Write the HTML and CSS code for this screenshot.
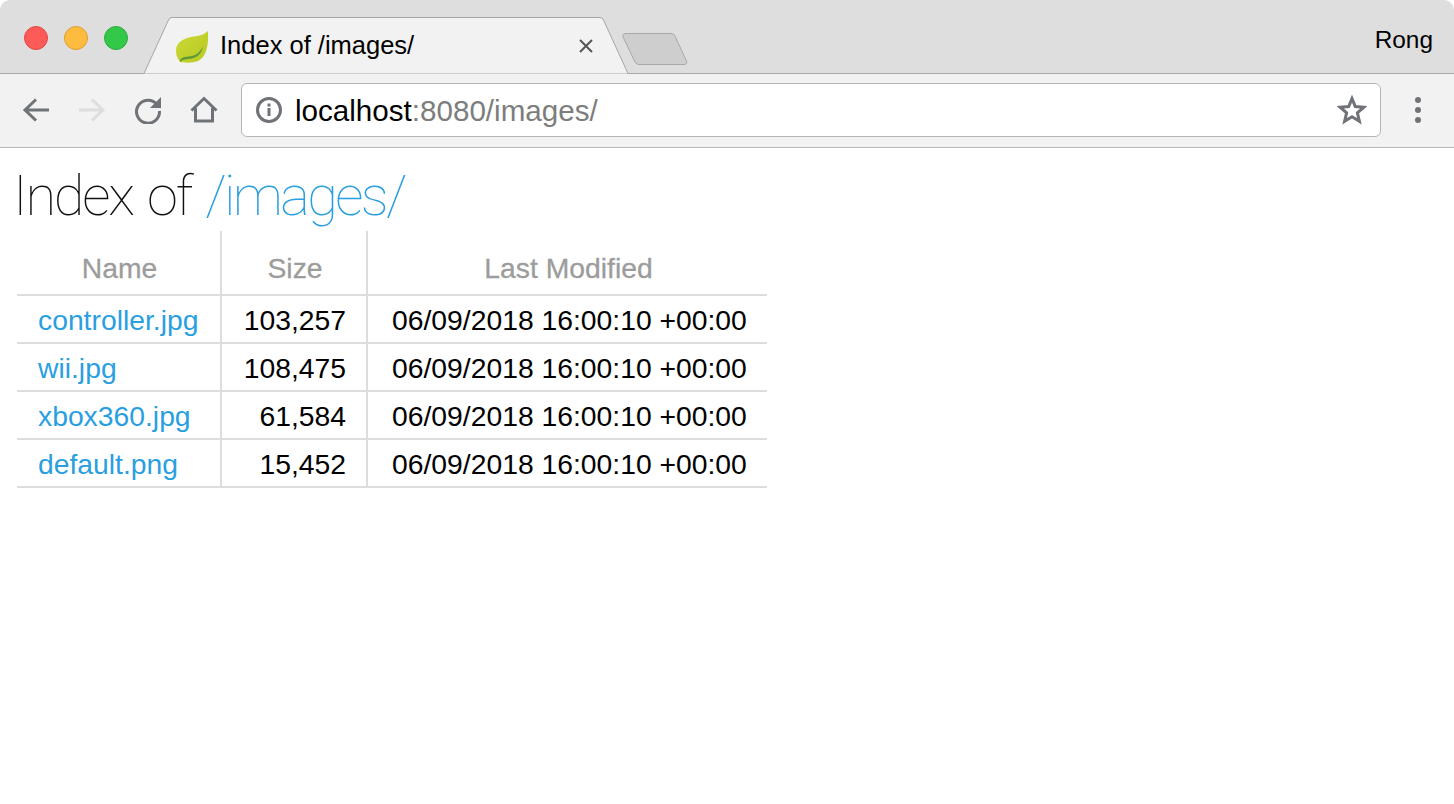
FILE: index.html
```html
<!DOCTYPE html>
<html lang="en">
<head>
    <meta charset="UTF-8">
    <meta name="viewport" content="width=device-width, initial-scale=1.0">
    <title>Index of /images/</title>
    <link rel="stylesheet" href="styles.css">
</head>
<body>
    <header class="browser">
        <div class="tabstrip">
            <div class="lights">
                <span class="light light-red"></span>
                <span class="light light-yellow"></span>
                <span class="light light-green"></span>
            </div>
            <div class="tab">
                <svg class="tab-shape" width="484" height="57" viewBox="0 0 484 57">
                    <path d="M0 56.500 L24.500 3 Q25.500 0.500 28 0.500 L456 0.500 Q458.500 0.500 459.500 3 L484 56.500" fill="#f2f2f2" stroke="#a6a6a6"/>
                </svg>
                <svg class="favicon" width="32" height="32" viewBox="0 0 32 32">
                    <defs>
                        <linearGradient id="leaf" x1="0" y1="0" x2="1" y2="1">
                            <stop offset="0" stop-color="#cbd932"/>
                            <stop offset="1" stop-color="#b8c925"/>
                        </linearGradient>
                    </defs>
                    <path d="M32 0 C28 4 22 5 15 6 C6 8 0 12 0 20 C0 25 2 28 4 31 C9 32 17 32 22 30 C29 27 33 17 32 0Z" fill="url(#leaf)"/>
                    <path d="M4 29 C7 25 11 26 16 25 C21 24 25 20 27 15 C26 22 22 26 16 27.500 C11 28.500 7 28 4 31Z" fill="#5d9a35"/>
                </svg>
                <span class="tab-title">Index of /images/</span>
                <svg class="tab-close" width="14" height="14" viewBox="0 0 14 14">
                    <path d="M1 1 L13 13 M13 1 L1 13" stroke="#555" stroke-width="2" fill="none"/>
                </svg>
            </div>
            <svg class="new-tab" width="66" height="32" viewBox="0 0 66 32">
                <path d="M4 0.500 L49 0.500 Q52 0.500 53 3 L64.500 28 Q65.500 31.500 62 31.500 L17 31.500 Q14 31.500 13 29 L1 4 Q0 0.500 4 0.500Z" fill="#cecece" stroke="#a9a9a9"/>
            </svg>
            <span class="profile">Rong</span>
        </div>
        <div class="toolbar">
            <button class="tool">
                <svg width="28" height="28" viewBox="0 0 28 28"><path d="M27 14 H3 M14 3.500 L3 14 L14 24.500" stroke="#6f7377" stroke-width="3" fill="none"/></svg>
            </button>
            <button class="tool">
                <svg width="28" height="28" viewBox="0 0 28 28"><path d="M1 14 H25 M14 3.500 L25 14 L14 24.500" stroke="#dcdddd" stroke-width="3" fill="none"/></svg>
            </button>
            <button class="tool">
                <svg width="28" height="28" viewBox="0 0 28 28"><path d="M23 8.500 A11.500 11.500 0 1 0 25.500 15" stroke="#6f7377" stroke-width="3" fill="none"/><path d="M27 1 V12 H16Z" fill="#6f7377"/></svg>
            </button>
            <button class="tool">
                <svg width="28" height="28" viewBox="0 0 28 28"><path d="M1.500 14.500 L14 2.500 L26.500 14.500 M5.500 12 V25 H22.500 V12" stroke="#6f7377" stroke-width="3" fill="none"/></svg>
            </button>
            <div class="omnibox">
                <svg class="info" width="28" height="28" viewBox="0 0 28 28">
                    <circle cx="14" cy="14" r="11.500" stroke="#6f7377" stroke-width="3" fill="none"/>
                    <rect x="12.500" y="12" width="3" height="8" fill="#6f7377"/>
                    <rect x="12.500" y="7.500" width="3" height="3" fill="#6f7377"/>
                </svg>
                <span class="url"><span class="url-host">localhost</span>:8080/images/</span>
                <svg class="star" width="30" height="30" viewBox="0 0 30 30">
                    <path d="M15 3.500 L18.300 11.500 L27 12.200 L20.400 17.800 L22.400 26.300 L15 21.800 L7.600 26.300 L9.600 17.800 L3 12.200 L11.700 11.500Z" stroke="#6f7377" stroke-width="3" fill="none"/>
                </svg>
            </div>
            <button class="tool tool-menu">
                <svg width="8" height="28" viewBox="0 0 8 28"><circle cx="4" cy="4" r="3" fill="#6f7377"/><circle cx="4" cy="14" r="3" fill="#6f7377"/><circle cx="4" cy="24" r="3" fill="#6f7377"/></svg>
            </button>
        </div>
    </header>

    <main>
        <h1>Index of <span class="path">/images/</span></h1>
        <table>
            <thead>
                <tr>
                    <th class="col-name">Name</th>
                    <th class="col-size">Size</th>
                    <th class="col-date">Last Modified</th>
                </tr>
            </thead>
            <tbody>
                <tr>
                    <td><a href="#">controller.jpg</a></td>
                    <td class="num">103,257</td>
                    <td>06/09/2018 16:00:10 +00:00</td>
                </tr>
                <tr>
                    <td><a href="#">wii.jpg</a></td>
                    <td class="num">108,475</td>
                    <td>06/09/2018 16:00:10 +00:00</td>
                </tr>
                <tr>
                    <td><a href="#">xbox360.jpg</a></td>
                    <td class="num">61,584</td>
                    <td>06/09/2018 16:00:10 +00:00</td>
                </tr>
                <tr>
                    <td><a href="#">default.png</a></td>
                    <td class="num">15,452</td>
                    <td>06/09/2018 16:00:10 +00:00</td>
                </tr>
            </tbody>
        </table>
    </main>
</body>
</html>
```

FILE: styles.css
```css
body {
    font-family: 'Liberation Sans', Arial, sans-serif;
    background: #fff;
    color: #000;
    margin: 0;
    padding: 0;
}

.tabstrip {
    display: flex;
    align-items: flex-start;
    height: 73px;
    padding-left: 24px;
    background: #dedede;
    border-bottom: 1px solid #a9a9a9;
    border-radius: 10px 10px 0 0;
}

.lights {
    display: flex;
    gap: 16px;
    margin-top: 26px;
}

.light {
    width: 24px;
    height: 24px;
    box-sizing: border-box;
    border-radius: 50%;
    border: 1px solid;
}

.light-red {
    background: #fc5b57;
    border-color: #e2483f;
}

.light-yellow {
    background: #fdbb3f;
    border-color: #e09e2f;
}

.light-green {
    background: #33c848;
    border-color: #29ad3a;
}

.tab {
    position: relative;
    display: flex;
    align-items: center;
    width: 484px;
    height: 57px;
    margin: 17px 0 0 16px;
    box-sizing: border-box;
    padding: 0 35px 0 32px;
}

.tab-shape {
    position: absolute;
    left: 0;
    top: 0;
}

.favicon {
    position: relative;
    margin-top: 3px;
    filter: blur(0.5px);
}

.tab-title {
    position: relative;
    margin-left: 12px;
    font-size: 25.500px;
}

.tab-close {
    position: relative;
    margin-left: auto;
}

.new-tab {
    margin: 33px 0 0 -6px;
}

.profile {
    margin: 25px 21px 0 auto;
    font-size: 24.400px;
    line-height: 30px;
}

.toolbar {
    display: flex;
    align-items: center;
    height: 74px;
    box-sizing: border-box;
    padding: 0 0 2px 8px;
    background: #f2f2f2;
    border-bottom: 1px solid #b9b9b9;
}

.tool {
    display: flex;
    justify-content: center;
    align-items: center;
    width: 56px;
    height: 54px;
    padding: 0;
    background: none;
    border: none;
}

.tool-menu {
    width: 73px;
}

.omnibox {
    flex: 1;
    display: flex;
    align-items: center;
    height: 54px;
    margin-left: 9px;
    padding: 0 13px;
    box-sizing: border-box;
    background: #fff;
    border: 1px solid #b5b5b5;
    border-radius: 6px;
}

.url {
    margin-left: 12px;
    padding-top: 3px;
    font-size: 29.600px;
    color: #7d7d7d;
}

.url-host {
    color: #000;
}

.star {
    margin-left: auto;
}

main {
    padding: 0 17px;
}

h1 {
    height: 83px;
    margin: 0 0 0 -4px;
    font-family: Roboto, 'Liberation Sans', sans-serif;
    font-size: 56px;
    font-weight: 100;
    letter-spacing: -2.200px;
    word-spacing: 3px;
    line-height: 97px;
    color: #111;
}

.path {
    color: #2a9fdf;
    letter-spacing: -2.700px;
}

table {
    border-collapse: separate;
    border-spacing: 0;
    font-size: 28.300px;
}

th, td {
    box-sizing: border-box;
    padding: 0 21px;
    border-right: 2px solid #ddd;
    border-bottom: 2px solid #ddd;
}

th:last-child, td:last-child {
    border-right: none;
}

th {
    height: 65px;
    padding: 12px 20px 0 22px;
    font-weight: normal;
    color: #9c9c9c;
    text-align: center;
    -webkit-text-stroke: 0.300px #9c9c9c;
}

td {
    height: 48px;
    padding-top: 2px;
}

td:last-child {
    padding-left: 24px;
    padding-right: 18px;
}

.col-name {
    width: 205px;
}

.col-size {
    width: 146px;
}

.col-date {
    width: 399px;
}

.num {
    padding-right: 20px;
    text-align: right;
}

td a {
    color: #2a9fdf;
    text-decoration: none;
}
```
